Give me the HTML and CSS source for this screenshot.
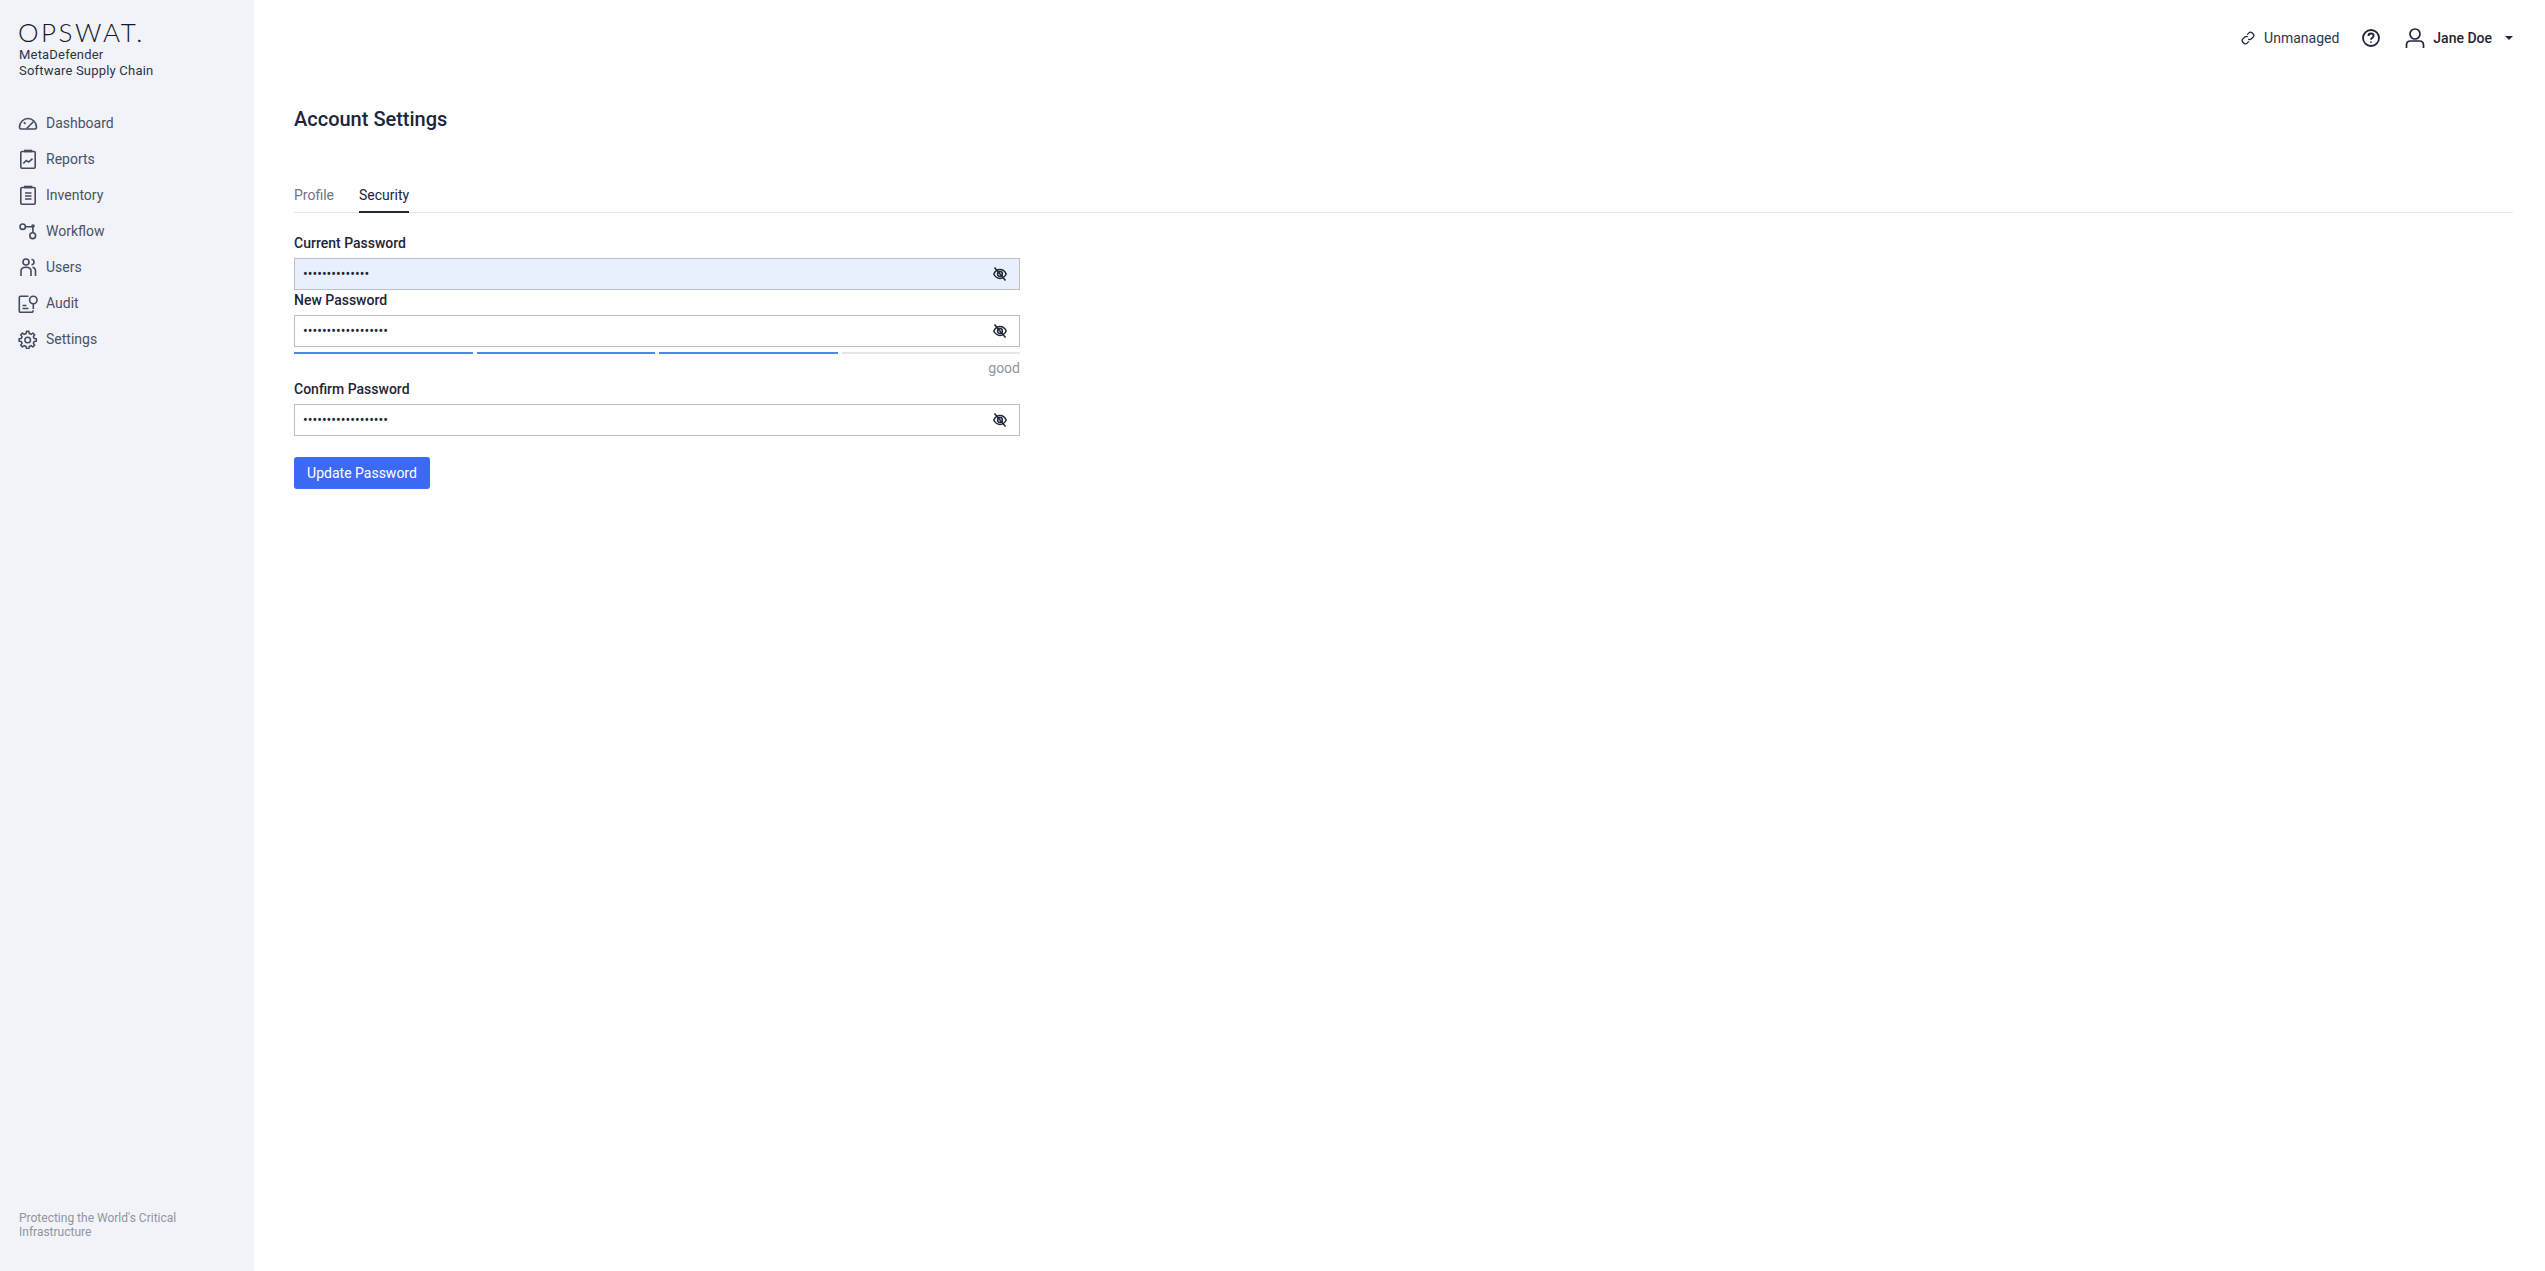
FILE: index.html
```html
<!DOCTYPE html>
<html lang="en">
    <head>
        <meta charset="UTF-8" />
        <meta name="viewport" content="width=device-width, initial-scale=1.0" />
        <title>Account Settings</title>
        <link rel="stylesheet" href="styles.css">
    </head>
    <body>
        <svg class="defs" width="0" height="0">
            <symbol id="eye-off" viewBox="0 0 16 16">
                <path d="M1.800 8C3.200 5 5.300 3.600 8 3.600s4.800 1.400 6.200 4.400c-1.400 3-3.500 4.400-6.200 4.400S3.200 11 1.800 8z" />
                <circle cx="8" cy="8" r="2.400" />
                <path d="M2.500 1.500l11 13" />
            </symbol>
        </svg>

        <div class="layout">
            <aside class="sidebar">
                <div class="brand">
                    <div class="brand-logo">OPSWAT.</div>
                    <div class="brand-name">MetaDefender<br />Software Supply Chain</div>
                </div>

                <nav class="nav">
                    <a class="nav-item">
                        <svg class="nav-icon" viewBox="0 0 20 20"><path d="M3 16h14c1 0 1.500-.6 1.500-1.500C18.500 9.300 14.500 5.500 10 5.500S1.500 9.300 1.500 14.500c0 .9.5 1.500 1.500 1.500z" /><path d="M8.700 15.500l6.600-6.800" /><path d="M5.800 9.200l1.700 1.700" /></svg>
                        <span>Dashboard</span>
                    </a>
                    <a class="nav-item">
                        <svg class="nav-icon" viewBox="0 0 20 20"><rect x="2.800" y="2.500" width="14.400" height="16.700" rx="1.200" /><path class="fat" d="M6 2h8.300" /><path d="M5.300 14.500l3-3 2.400 1.600 3.800-3.500" /></svg>
                        <span>Reports</span>
                    </a>
                    <a class="nav-item">
                        <svg class="nav-icon" viewBox="0 0 20 20"><rect x="2.800" y="2.500" width="14.400" height="16.700" rx="1.200" /><path class="fat" d="M6 2h8.300" /><path d="M7 8h6.500M7 11h6.500M7 14h6.500" /></svg>
                        <span>Inventory</span>
                    </a>
                    <a class="nav-item">
                        <svg class="nav-icon" viewBox="0 0 20 20"><circle cx="4.700" cy="5.700" r="2.700" /><circle cx="14.700" cy="14.700" r="2.900" /><circle cx="15" cy="5" r="1" /><path d="M7.400 5.700h6.600M14.900 6v5.800" /></svg>
                        <span>Workflow</span>
                    </a>
                    <a class="nav-item">
                        <svg class="nav-icon" viewBox="0 0 20 20"><circle cx="8" cy="5" r="3" /><path d="M13.500 2.200c1.500.2 2.500 1.300 2.500 2.800s-1 2.600-2.500 2.800" /><path d="M3 19v-5c0-2.300 1.700-3.800 5-3.800s5 1.500 5 3.800v5" /><path d="M14.500 10.300c2 .3 3 1.700 3 3.700v5" /></svg>
                        <span>Users</span>
                    </a>
                    <a class="nav-item">
                        <svg class="nav-icon" viewBox="0 0 20 20"><path d="M10.500 3.300H2.500c-.7 0-1.200.5-1.200 1.200v13.600c0 .7.5 1.200 1.200 1.200h11.300c.7 0 1.200-.5 1.200-1.200v-.8" /><circle cx="15.300" cy="7" r="3.700" /><path d="M15.300 10.700v5.300" /><path d="M4.500 12.500h4M4.500 15.500h6" /></svg>
                        <span>Audit</span>
                    </a>
                    <a class="nav-item">
                        <svg class="nav-icon" viewBox="0 0 20 20"><g transform="translate(9.700 11) scale(.87)"><circle r="3.200" stroke-width="1.800" /><path class="gear" stroke-width="1.800" d="M7.370-1.840L9.900-1.390 9.900 1.390 7.370 1.840 6.510 3.910 7.980 6.020 6.020 7.980 3.910 6.510 1.840 7.370 1.390 9.900-1.390 9.900-1.840 7.370-3.910 6.510-6.020 7.980-7.980 6.020-6.510 3.910-7.370 1.840-9.900 1.390-9.900-1.390-7.370-1.840-6.510-3.910-7.980-6.020-6.020-7.980-3.910-6.510-1.840-7.370-1.390-9.900 1.390-9.900 1.840-7.370 3.910-6.510 6.020-7.980 7.980-6.020 6.510-3.910z" /></g></svg>
                        <span>Settings</span>
                    </a>
                </nav>

                <div class="tagline">Protecting the World's Critical Infrastructure</div>
            </aside>

            <main class="main">
                <header class="topbar">
                    <div class="topbar-item">
                        <svg class="link-icon" viewBox="0 0 14 14"><path d="M6.200 3.600l1.700-1.700c.9-.9 2.200-.9 3.100-.1l1.200 1.200c.8.900.8 2.200-.1 3.100l-1.700 1.700c-.9.900-2.200.9-3.100.1" /><path d="M7.800 10.400l-1.700 1.700c-.9.900-2.200.9-3.100.1l-1.200-1.200c-.8-.9-.8-2.200.1-3.100l1.700-1.700c.9-.9 2.200-.9 3.100-.1" /></svg>
                        <span>Unmanaged</span>
                    </div>
                    <svg class="help-icon" viewBox="0 0 20 20"><circle cx="10" cy="10" r="8" /><path d="M7.400 8c0-1.500 1.100-2.500 2.600-2.500s2.600 1 2.600 2.300c0 2-2.600 2-2.600 3.900" /><path d="M10 13.500v1.300" /></svg>
                    <div class="user">
                        <svg class="user-icon" viewBox="0 0 20 20"><circle cx="10" cy="6" r="5" /><path d="M1.500 20v-3c0-2.500 1.500-4 4-4h9c2.500 0 4 1.500 4 4v3" /></svg>
                        <span class="user-name">Jane Doe</span>
                        <span class="caret"></span>
                    </div>
                </header>

                <h1>Account Settings</h1>

                <div class="tabs">
                    <div class="tab">Profile</div>
                    <div class="tab active">Security</div>
                </div>

                <form class="form">
                    <label class="label">Current Password</label>
                    <div class="input autofill">
                        <span class="dots">••••••••••••••</span>
                        <svg class="eye"><use href="#eye-off" /></svg>
                    </div>

                    <label class="label">New Password</label>
                    <div class="input">
                        <span class="dots">••••••••••••••••••</span>
                        <svg class="eye"><use href="#eye-off" /></svg>
                    </div>
                    <div class="strength">
                        <div class="segment on"></div>
                        <div class="segment on"></div>
                        <div class="segment on"></div>
                        <div class="segment"></div>
                    </div>
                    <div class="strength-text">good</div>

                    <label class="label">Confirm Password</label>
                    <div class="input">
                        <span class="dots">••••••••••••••••••</span>
                        <svg class="eye"><use href="#eye-off" /></svg>
                    </div>

                    <button class="btn" type="button">Update Password</button>
                </form>
            </main>
        </div>
    </body>
</html>
```

FILE: styles.css
```css
:root {
    --primary: #3d6af5;
    --meter: #4f87e8;
    --sidebar: #f1f3f9;
    --text: #1d2639;
    --text-nav: #4a5263;
    --text-muted: #8f95a3;
    --border: #bdbfc4;
    --line: #e6e7ea;
}

* {
    margin: 0;
    padding: 0;
    box-sizing: border-box;
}

html,
body {
    height: 100%;
}

body {
    font-family: Roboto, "Liberation Sans", sans-serif;
    font-size: 14px;
    color: var(--text);
    background-color: #ffffff;
}

.defs {
    position: absolute;
}

.layout {
    display: flex;
    height: 100vh;
}

/* sidebar */
.sidebar {
    width: 254px;
    flex-shrink: 0;
    display: flex;
    flex-direction: column;
    background-color: var(--sidebar);
    padding: 20px 19px 32px;
}

.brand-logo {
    font-family: Lato, sans-serif;
    font-weight: 300;
    font-size: 26px;
    line-height: 24px;
    letter-spacing: 2.5px;
    margin-left: -1px;
    color: #111a2c;
}

.brand-name {
    font-size: 13px;
    letter-spacing: 0.2px;
    line-height: 16px;
    margin-top: 3px;
    color: #2c3446;
}

.nav {
    display: flex;
    flex-direction: column;
    margin-top: 26px;
}

.nav-item {
    display: flex;
    align-items: center;
    gap: 8px;
    height: 36px;
    margin-left: -1px;
    color: var(--text-nav);
}

.nav-icon {
    width: 20px;
    height: 20px;
    flex-shrink: 0;
    fill: none;
    stroke: #434b5c;
    stroke-width: 1.600;
}

.nav-icon .fat {
    stroke-width: 2.600;
}

.gear {
    stroke-linejoin: round;
}

.tagline {
    margin-top: auto;
    width: 180px;
    font-size: 12px;
    line-height: 14px;
    color: var(--text-muted);
}

/* main */
.main {
    flex: 1;
    padding: 0 32px 0 40px;
}

.topbar {
    display: flex;
    justify-content: flex-end;
    align-items: center;
    height: 76px;
}

.topbar-item {
    display: flex;
    align-items: center;
    gap: 9px;
    color: #2c3650;
}

.link-icon {
    width: 14px;
    height: 14px;
    fill: none;
    stroke: var(--text);
    stroke-width: 1.300;
}

.help-icon {
    width: 20px;
    height: 20px;
    margin-left: 22px;
    fill: none;
    stroke: var(--text);
    stroke-width: 1.800;
}

.user {
    display: flex;
    align-items: center;
    margin-left: 24px;
}

.user-icon {
    width: 20px;
    height: 20px;
    fill: none;
    stroke: var(--text);
    stroke-width: 1.700;
}

.user-name {
    margin-left: 8px;
    font-weight: 500;
}

.caret {
    width: 0;
    height: 0;
    margin-left: 13px;
    border-left: 4px solid transparent;
    border-right: 4px solid transparent;
    border-top: 4px solid var(--text);
}

h1 {
    font-size: 20px;
    font-weight: 500;
    line-height: 28px;
    margin-top: 29px;
}

.tabs {
    display: flex;
    gap: 25px;
    margin-top: 52px;
    border-bottom: 1px solid var(--line);
}

.tab {
    height: 28px;
    line-height: 20px;
    margin-bottom: -1px;
    color: #6f7583;
}

.tab.active {
    color: var(--text);
    border-bottom: 2px solid var(--text);
}

.form {
    width: 726px;
    display: flex;
    flex-direction: column;
    margin-top: 20px;
}

.label {
    font-weight: 500;
    line-height: 20px;
    height: 25px;
    color: var(--text);
}

.input {
    display: flex;
    align-items: center;
    justify-content: space-between;
    height: 32px;
    padding: 0 11px 0 8px;
    border: 1px solid var(--border);
    background-color: #ffffff;
}

.input.autofill {
    background-color: #e8f0fe;
}

.dots {
    font-size: 14px;
    color: var(--text);
}

.eye {
    width: 16px;
    height: 16px;
    fill: none;
    stroke: var(--text);
    stroke-width: 1.500;
}

.strength {
    display: flex;
    gap: 4px;
    margin-top: 5px;
}

.segment {
    flex: 1;
    height: 2px;
    background-color: var(--line);
}

.segment.on {
    background-color: var(--meter);
}

.strength-text {
    text-align: right;
    line-height: 20px;
    height: 21px;
    margin-top: 4px;
    color: var(--text-muted);
}

.btn {
    align-self: flex-start;
    width: 136px;
    height: 32px;
    margin-top: 21px;
    border: none;
    border-radius: 3px;
    font-family: inherit;
    font-size: 14px;
    color: #ffffff;
    background-color: var(--primary);
}
```
